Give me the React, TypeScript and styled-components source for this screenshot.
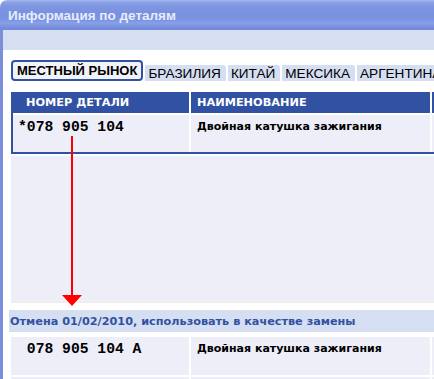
import React from "react";
import styled, { createGlobalStyle } from "styled-components";

const GlobalStyle = createGlobalStyle`
  html, body { margin: 0; padding: 0; background: #ffffff; overflow: hidden; }
  body { font-family: "Liberation Sans", Arial, sans-serif; }
`;

const BLUE = "#3152a2";
const LIGHT = "#eeeef8";
const BAND = "#d6dff1";

const Window = styled.div`
  position: relative;
  width: 434px;
  height: 379px;
  overflow: hidden;
  display: flex;
  flex-direction: column;
  background: #ffffff;
`;

const TitleBar = styled.div`
  height: 30px;
  flex: none;
  display: flex;
  align-items: center;
  padding-left: 8px;
  border-top-left-radius: 7px;
  background: linear-gradient(
    to bottom,
    #a9bbf0 0px,
    #8da3e8 2px,
    #7f97e2 6px,
    #7890de 14px,
    #7c94e1 20px,
    #87a0e8 23px,
    #7890dd 27px,
    #7188d6 30px
  );
  color: #e6ecfc;
  font-family: "Liberation Sans", Arial, sans-serif;
  font-weight: bold;
  font-size: 13.5px;
`;

const Body = styled.div`
  flex: 1;
  display: flex;
  flex-direction: column;
  border-left: 3px solid #7b8ed9;
`;

const Band = styled.div`
  height: 20px;
  flex: none;
  background: ${BAND};
`;

const Content = styled.div`
  display: flex;
  flex-direction: column;
  padding: 10px 0 0 8px;
`;

const Tabs = styled.div`
  display: flex;
  align-items: flex-end;
  gap: 2px;
  height: 21px;
  white-space: nowrap;
`;

const Tab = styled.div<{ $active?: boolean }>`
  flex: none;
  display: flex;
  align-items: center;
  box-sizing: border-box;
  font-family: "Liberation Sans", Arial, sans-serif;
  font-size: ${(p) => (p.$active ? "13px" : "13.6px")};
  font-weight: ${(p) => (p.$active ? "bold" : "normal")};
  color: #000;
  height: ${(p) => (p.$active ? "21px" : "16px")};
  padding: ${(p) => (p.$active ? "0 4px" : "0 5px 0 3px")};
  background: ${(p) => (p.$active ? "#f2f2fa" : BAND)};
  border: ${(p) => (p.$active ? `2px solid ${BLUE}` : "none")};
  border-radius: ${(p) => (p.$active ? "4px" : "0 3px 0 0")};
`;

const Table = styled.div`
  margin-top: 11px;
  display: grid;
  grid-template-columns: 176px 239px 120px;
  column-gap: 2px;
  row-gap: 2px;
  background: #ffffff;
  border-left: 2px solid ${BLUE};
  border-bottom: 2px solid ${BLUE};
  width: 600px;
`;

const HeadCell = styled.div<{ $pad: number }>`
  height: 21px;
  background: ${BLUE};
  color: #ffffff;
  font-family: "DejaVu Sans", Verdana, sans-serif;
  font-weight: bold;
  font-size: 11.3px;
  display: flex;
  align-items: center;
  padding-left: ${(p) => p.$pad}px;
`;

const Cell = styled.div<{ $mono?: boolean; $pad: number; $h: number }>`
  height: ${(p) => p.$h}px;
  box-sizing: border-box;
  background: ${LIGHT};
  padding: 4px 0 0 ${(p) => p.$pad}px;
  white-space: pre;
  color: #000;
  font-weight: bold;
  font-family: ${(p) =>
    p.$mono
      ? `"Liberation Mono", "Courier New", monospace`
      : `"DejaVu Sans", Verdana, sans-serif`};
  font-size: ${(p) => (p.$mono ? "14.7px" : "11px")};
  line-height: 16px;
`;

const Empty = styled.div`
  margin-top: 2px;
  height: 146px;
  background: ${LIGHT};
  border-bottom: 1px solid #f4ebe4;
`;

const CancelBand = styled.div`
  margin: 7px 0 0 -2px;
  height: 22px;
  background: ${BAND};
  color: ${BLUE};
  font-family: "DejaVu Sans", Verdana, sans-serif;
  font-weight: bold;
  font-size: 11.25px;
  display: flex;
  align-items: center;
  padding-left: 1px;
  white-space: nowrap;
`;

const Rows = styled.div`
  margin-top: 5px;
  display: grid;
  grid-template-columns: 178px 239px 120px;
  column-gap: 2px;
  row-gap: 2px;
  width: 600px;
`;

const Arrow = styled.svg`
  position: absolute;
  left: 62px;
  top: 136px;
`;

export default function App() {
  return (
    <>
      <GlobalStyle />
      <Window>
        <TitleBar>Информация по деталям</TitleBar>
        <Body>
          <Band />
          <Content>
            <Tabs>
              <Tab $active>МЕСТНЫЙ РЫНОК</Tab>
              <Tab>БРАЗИЛИЯ</Tab>
              <Tab>КИТАЙ</Tab>
              <Tab>МЕКСИКА</Tab>
              <Tab>АРГЕНТИНА</Tab>
            </Tabs>
            <Table>
              <HeadCell $pad={13}>НОМЕР ДЕТАЛИ</HeadCell>
              <HeadCell $pad={6}>НАИМЕНОВАНИЕ</HeadCell>
              <HeadCell $pad={6} />
              <Cell $mono $pad={5} $h={37}>*078 905 104</Cell>
              <Cell $pad={6} $h={37}>Двойная катушка зажигания</Cell>
              <Cell $pad={6} $h={37} />
            </Table>
            <Empty />
            <CancelBand>Отмена 01/02/2010, использовать в качестве замены</CancelBand>
            <Rows>
              <Cell $mono $pad={7} $h={38}> 078 905 104 A</Cell>
              <Cell $pad={6} $h={38}>Двойная катушка зажигания</Cell>
              <Cell $pad={6} $h={38} />
              <Cell $pad={6} $h={20} />
              <Cell $pad={6} $h={20} />
              <Cell $pad={6} $h={20} />
            </Rows>
          </Content>
        </Body>
        <Arrow width="20" height="172" viewBox="0 0 20 172">
          <rect x="9" y="0" width="2" height="160" fill="#ff0000" />
          <polygon points="0,159 20,159 10,170" fill="#ff0000" />
        </Arrow>
      </Window>
    </>
  );
}
